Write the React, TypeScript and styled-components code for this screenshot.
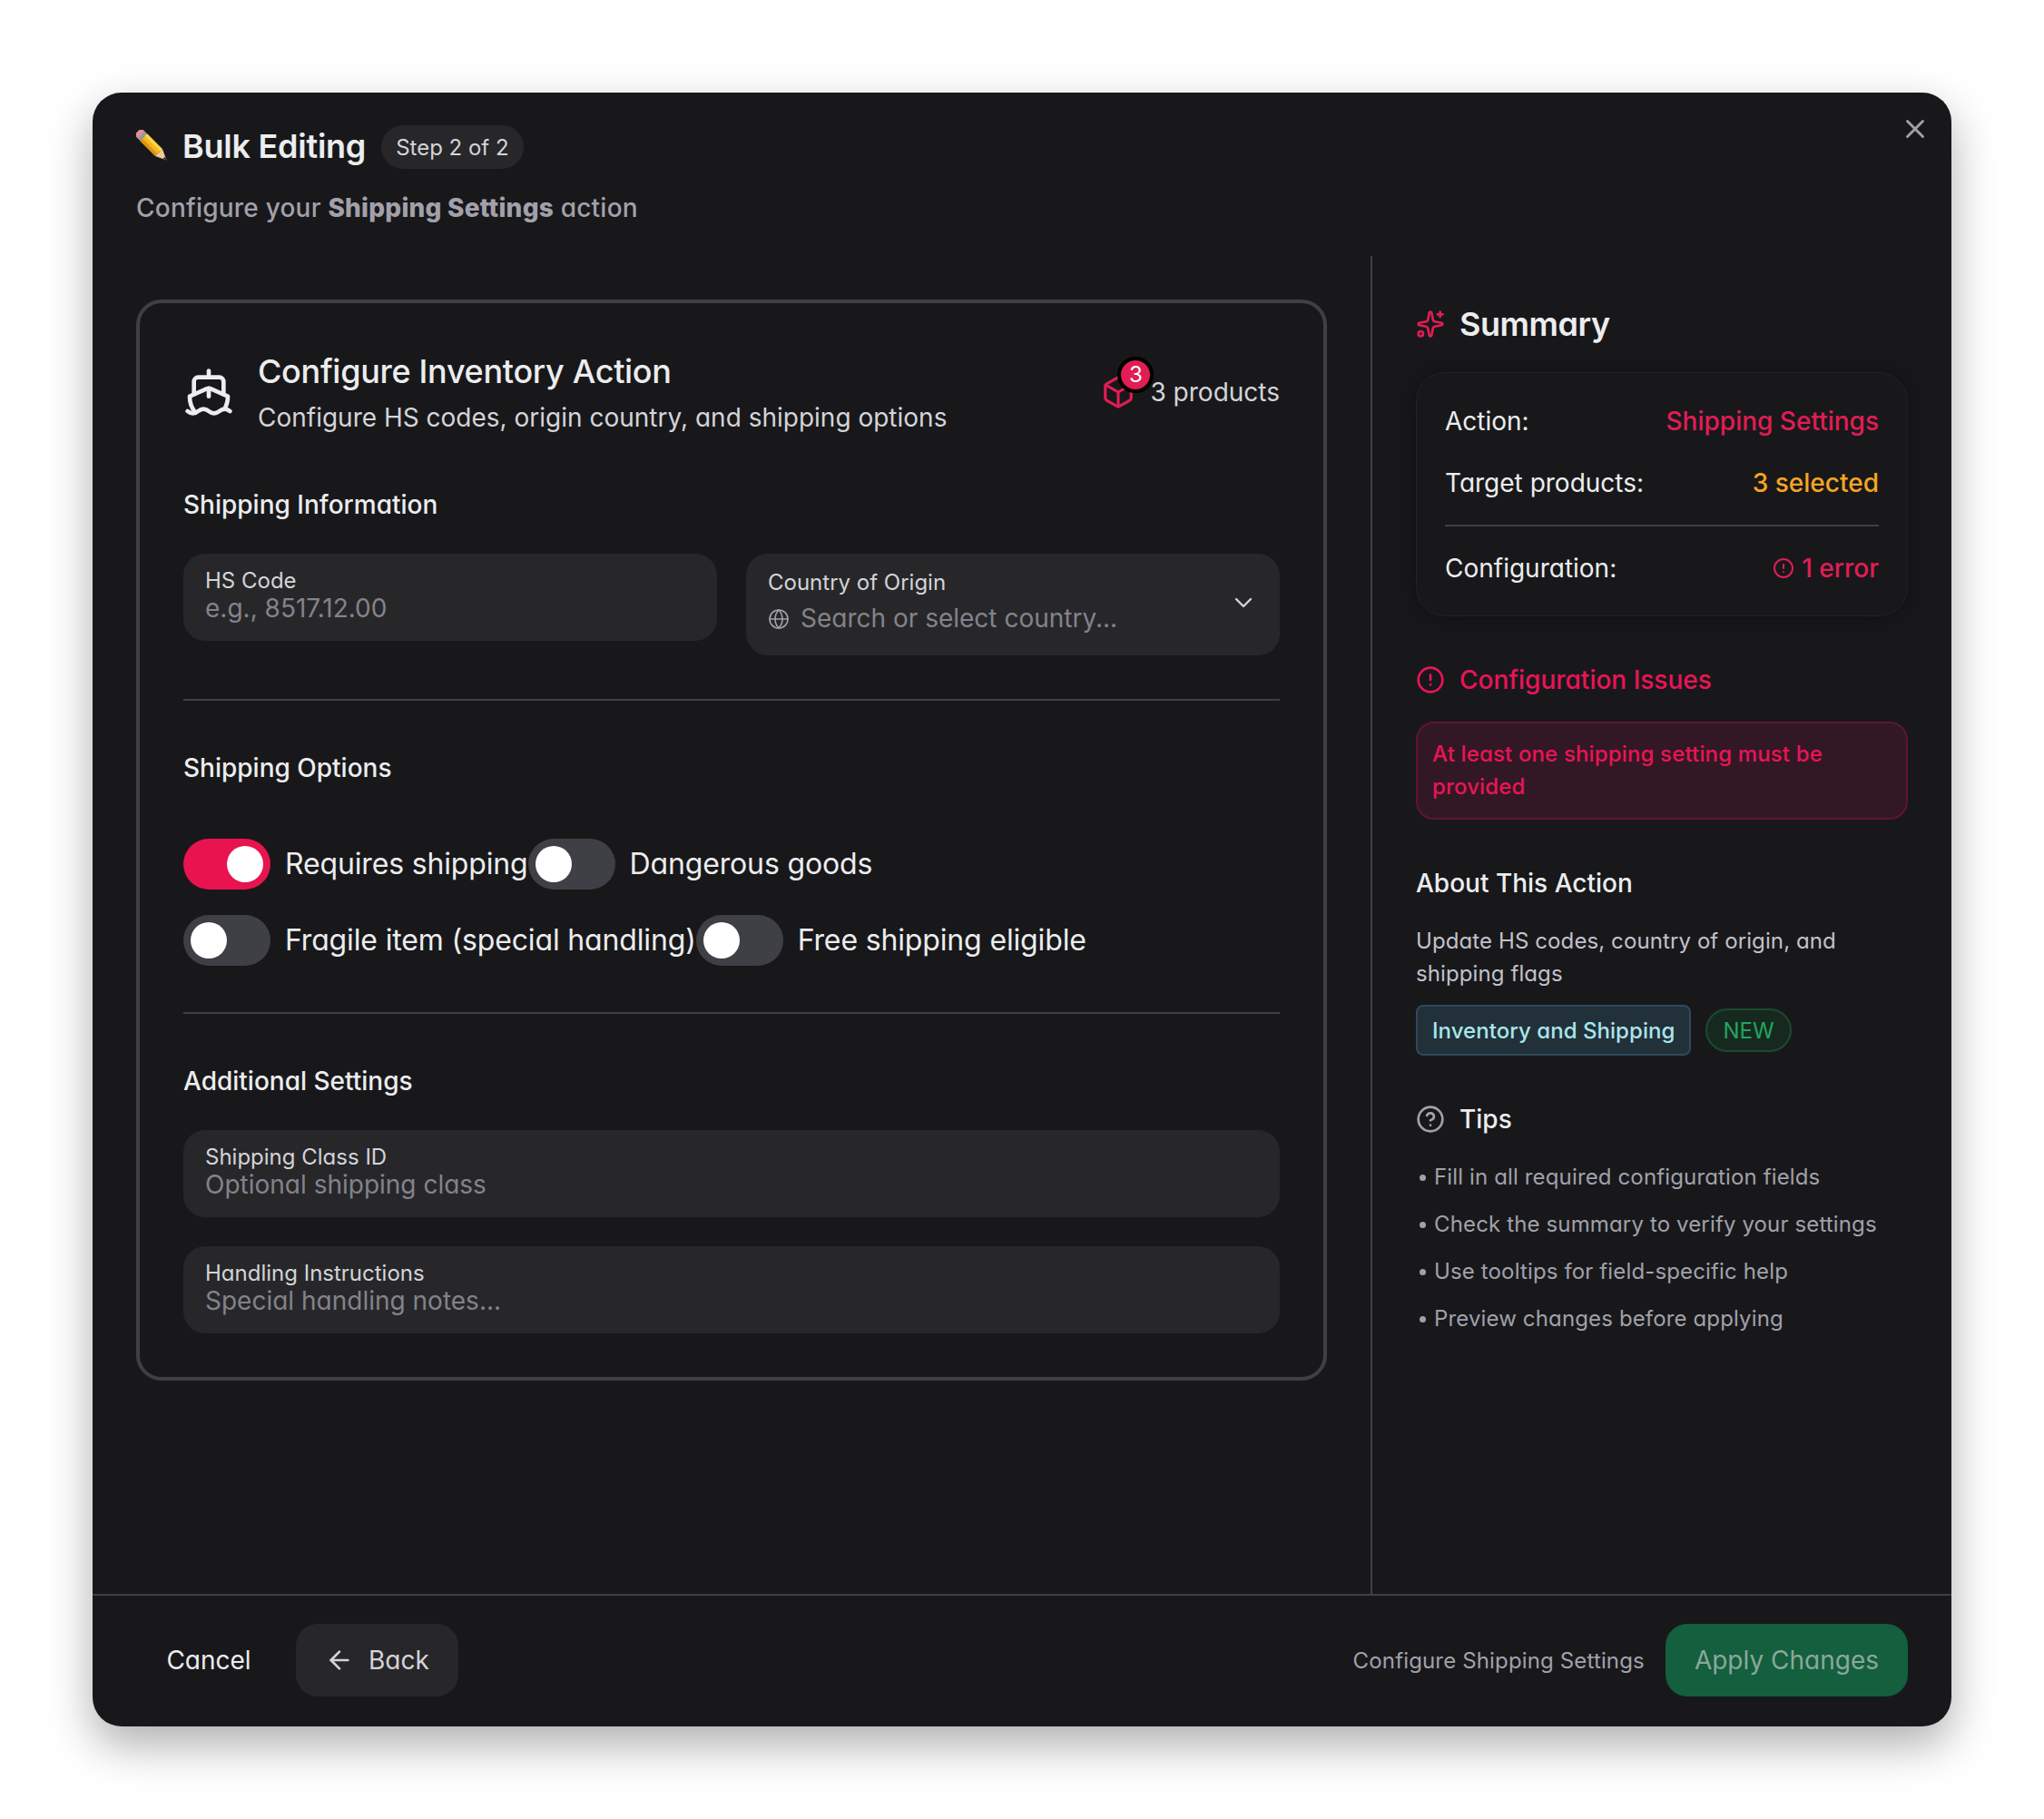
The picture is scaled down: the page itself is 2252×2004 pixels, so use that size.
import styled, { createGlobalStyle } from "styled-components";
import {
  ArrowLeft,
  Box,
  ChevronDown,
  CircleAlert,
  CircleHelp,
  Globe,
  Ship,
  Sparkles,
  X,
} from "lucide-react";

const RED = "#ea1456";

const GlobalStyle = createGlobalStyle`
  * {
    box-sizing: border-box;
  }

  body {
    margin: 0;
    background: #ffffff;
    font-family: Inter, "Noto Sans", "Liberation Sans", sans-serif;
    font-feature-settings: "cv11";
    color: #ecedee;
  }
`;

const PencilEmoji = () => (
  <svg width="36" height="36" viewBox="0 0 36 36">
    <g transform="rotate(45 18 18)">
      <rect x="-5" y="12.5" width="7" height="11" rx="3" fill="#e88a94" />
      <rect x="0" y="12.5" width="4" height="11" fill="#8d9db0" />
      <rect x="4" y="12.5" width="24" height="11" fill="#f5b81f" />
      <rect x="4" y="12.5" width="24" height="3.5" fill="#fbd44a" />
      <rect x="4" y="20" width="24" height="3.5" fill="#dd9412" />
      <path d="M28 12.5 L40 18 L28 23.5 Z" fill="#eccb9a" />
      <path d="M36 16.2 L40 18 L36 19.8 Z" fill="#33302c" />
    </g>
  </svg>
);

const Switch = ({ on, label }: { on?: boolean; label: string }) => (
  <SwitchItem>
    <Track $on={on}>
      <Thumb />
    </Track>
    <SwitchLabel>{label}</SwitchLabel>
  </SwitchItem>
);

const TextField = ({ label, placeholder }: { label: string; placeholder: string }) => (
  <Field>
    <FieldLabel>{label}</FieldLabel>
    <FieldValue>{placeholder}</FieldValue>
  </Field>
);

const App = () => {
  const tips = [
    "Fill in all required configuration fields",
    "Check the summary to verify your settings",
    "Use tooltips for field-specific help",
    "Preview changes before applying",
  ];

  return (
    <Page>
      <GlobalStyle />
      <Modal>
        <CloseButton>
          <X size={34} strokeWidth={2} />
        </CloseButton>
        <Header>
          <TitleRow>
            <PencilEmoji />
            <Title>Bulk Editing</Title>
            <StepBadge>Step 2 of 2</StepBadge>
          </TitleRow>
          <Subtitle>
            Configure your <strong>Shipping Settings</strong> action
          </Subtitle>
        </Header>

        <Body>
          <MainColumn>
            <Card>
              <CardHeader>
                <Ship size={56} strokeWidth={2} color="#ecedee" />
                <CardHeading>
                  <CardTitle>Configure Inventory Action</CardTitle>
                  <CardSubtitle>Configure HS codes, origin country, and shipping options</CardSubtitle>
                </CardHeading>
                <ProductCount>
                  <BoxWrap>
                    <Box size={38} strokeWidth={2} color="#e11d54" />
                    <CountBadge>3</CountBadge>
                  </BoxWrap>
                  <span>3 products</span>
                </ProductCount>
              </CardHeader>

              <SectionLabel>Shipping Information</SectionLabel>
              <FieldRow>
                <TextField label="HS Code" placeholder="e.g., 8517.12.00" />
                <SelectField>
                  <SelectBody>
                    <FieldLabel>Country of Origin</FieldLabel>
                    <SelectValue>
                      <Globe size={24} strokeWidth={1.6} color="#a1a1aa" />
                      <FieldValue>Search or select country...</FieldValue>
                    </SelectValue>
                  </SelectBody>
                  <ChevronDown size={32} strokeWidth={1.8} color="#d4d4d8" />
                </SelectField>
              </FieldRow>

              <Divider />

              <SectionLabel $spaced>Shipping Options</SectionLabel>
              <SwitchRows>
                <SwitchRow>
                  <Switch on label="Requires shipping" />
                  <Switch label="Dangerous goods" />
                </SwitchRow>
                <SwitchRow>
                  <Switch label="Fragile item (special handling)" />
                  <Switch label="Free shipping eligible" />
                </SwitchRow>
              </SwitchRows>

              <Divider />

              <SectionLabel>Additional Settings</SectionLabel>
              <FieldStack>
                <TextField label="Shipping Class ID" placeholder="Optional shipping class" />
                <TextField label="Handling Instructions" placeholder="Special handling notes..." />
              </FieldStack>
            </Card>
          </MainColumn>

          <SideColumn>
            <SummaryTitle>
              <Sparkles size={32} strokeWidth={2} color="#e11d54" />
              Summary
            </SummaryTitle>
            <SummaryCard>
              <SummaryRow>
                <span>Action:</span>
                <SummaryValue $color="#e11d54">Shipping Settings</SummaryValue>
              </SummaryRow>
              <SummaryRow>
                <span>Target products:</span>
                <SummaryValue $color="#f5a524">3 selected</SummaryValue>
              </SummaryRow>
              <SummaryDivider />
              <SummaryRow>
                <span>Configuration:</span>
                <SummaryValue $color="#e11d54">
                  <CircleAlert size={24} strokeWidth={2} />1 error
                </SummaryValue>
              </SummaryRow>
            </SummaryCard>

            <SideHeading $color={RED}>
              <CircleAlert size={32} strokeWidth={2} />
              Configuration Issues
            </SideHeading>
            <ErrorBox>At least one shipping setting must be provided</ErrorBox>

            <SideHeading>About This Action</SideHeading>
            <Description>Update HS codes, country of origin, and shipping flags</Description>
            <ChipRow>
              <CategoryChip>Inventory and Shipping</CategoryChip>
              <NewChip>NEW</NewChip>
            </ChipRow>

            <SideHeading>
              <CircleHelp size={32} strokeWidth={2} color="#a1a1aa" />
              Tips
            </SideHeading>
            <TipList>
              {tips.map((t) => (
                <TipItem key={t}>{t}</TipItem>
              ))}
            </TipList>
          </SideColumn>
        </Body>

        <Footer>
          <FooterGroup>
            <CancelButton>Cancel</CancelButton>
            <BackButton>
              <ArrowLeft size={32} strokeWidth={2} />
              Back
            </BackButton>
          </FooterGroup>
          <FooterGroup $gap={23}>
            <FooterHint>Configure Shipping Settings</FooterHint>
            <ApplyButton>Apply Changes</ApplyButton>
          </FooterGroup>
        </Footer>
      </Modal>
    </Page>
  );
};

const Page = styled.div`
  width: 2252px;
  height: 2004px;
  padding: 102px;
  background: #ffffff;
`;

const Modal = styled.div`
  position: relative;
  display: flex;
  flex-direction: column;
  width: 2048px;
  height: 1800px;
  background: #18181b;
  border-radius: 32px;
  box-shadow: 0 20px 50px rgba(0, 0, 0, 0.32);
`;

const CloseButton = styled.div`
  position: absolute;
  top: 23px;
  right: 23px;
  display: flex;
  color: #a1a1aa;
`;

const Header = styled.div`
  height: 180px;
  padding: 35px 48px 0;
`;

const TitleRow = styled.div`
  display: flex;
  align-items: center;
  height: 48px;
`;

const Title = styled.h1`
  margin: 0 17px 0 15px;
  font-size: 36px;
  font-weight: 600;
  line-height: 48px;
  letter-spacing: -0.25px;
  color: #ecedee;
`;

const StepBadge = styled.span`
  display: flex;
  align-items: center;
  height: 48px;
  margin-top: 2px;
  padding: 0 16px;
  border-radius: 24px;
  background: #27272a;
  font-size: 24px;
  color: #d4d4d8;
`;

const Subtitle = styled.p`
  margin: 24px 0 0;
  font-size: 28px;
  font-weight: 500;
  line-height: 40px;
  letter-spacing: 0.22px;
  color: #a1a1aa;

  strong {
    font-weight: 800;
  }
`;

const Body = styled.div`
  flex: 1;
  display: flex;
  min-height: 0;
`;

const MainColumn = styled.div`
  flex: 1;
  padding: 48px;
`;

const Card = styled.div`
  padding: 48px;
  border: 4px solid #3f3f46;
  border-radius: 28px;
`;

const CardHeader = styled.div`
  display: flex;
  align-items: center;
  gap: 26px;
`;

const CardHeading = styled.div`
  flex: 1;
`;

const CardTitle = styled.h2`
  margin: -1px 0 1px;
  font-size: 36px;
  font-weight: 500;
  line-height: 56px;
  letter-spacing: -0.3px;
  color: #ecedee;
`;

const CardSubtitle = styled.p`
  margin: 0;
  font-size: 28px;
  line-height: 44px;
  color: #d4d4d8;
`;

const ProductCount = styled.div`
  display: flex;
  align-items: center;
  gap: 16px;
  font-size: 28px;
  line-height: 40px;
  color: #d4d4d8;
`;

const BoxWrap = styled.div`
  position: relative;
  display: flex;
`;

const CountBadge = styled.span`
  position: absolute;
  top: -20px;
  right: -20px;
  display: flex;
  align-items: center;
  justify-content: center;
  width: 40px;
  height: 40px;
  border: 4px solid #000000;
  border-radius: 50%;
  background: #e11d54;
  font-size: 24px;
  color: #ffffff;
`;

const SectionLabel = styled.h3<{ $spaced?: boolean }>`
  margin: 54px 0 ${(props) => (props.$spaced ? "58px" : "34px")};
  font-size: 28px;
  font-weight: 500;
  line-height: 40px;
  color: #ecedee;
`;

const FieldRow = styled.div`
  display: grid;
  grid-template-columns: 1fr 1fr;
  gap: 32px;
  align-items: start;
`;

const FieldStack = styled.div`
  display: flex;
  flex-direction: column;
  gap: 32px;
`;

const Field = styled.div`
  height: 96px;
  padding: 15px 24px 0;
  border-radius: 24px;
  background: #27272a;
`;

const FieldLabel = styled.div`
  font-size: 24px;
  line-height: 30px;
  color: #d4d4d8;
`;

const FieldValue = styled.div`
  font-size: 28px;
  line-height: 30px;
  color: #83838b;
`;

const SelectField = styled.div`
  display: flex;
  align-items: center;
  height: 112px;
  padding: 0 24px 4px;
  border-radius: 24px;
  background: #27272a;
`;

const SelectBody = styled.div`
  flex: 1;
  margin-top: -6px;
`;

const SelectValue = styled.div`
  display: flex;
  align-items: center;
  gap: 12px;
  margin-top: 9px;

  svg {
    margin-top: 3px;
  }
`;

const Divider = styled.hr`
  height: 2px;
  margin: 48px 0 0;
  border: none;
  background: #3f3f46;
`;

const SwitchRows = styled.div`
  display: flex;
  flex-direction: column;
  gap: 28px;
  margin-bottom: 51px;
`;

const SwitchRow = styled.div`
  display: flex;
`;

const SwitchItem = styled.div`
  display: flex;
  align-items: center;
  gap: 16px;
`;

const Track = styled.div<{ $on?: boolean }>`
  display: flex;
  align-items: center;
  justify-content: ${(props) => (props.$on ? "flex-end" : "flex-start")};
  width: 96px;
  height: 56px;
  padding: 0 8px;
  border-radius: 28px;
  background: ${(props) => (props.$on ? "#e8134f" : "#3f3f46")};
`;

const Thumb = styled.div`
  width: 40px;
  height: 40px;
  border-radius: 50%;
  background: #ffffff;
`;

const SwitchLabel = styled.span`
  font-size: 32px;
  line-height: 44px;
  letter-spacing: -0.15px;
  color: #ecedee;
`;

const SideColumn = styled.div`
  width: 640px;
  padding: 48px;
  border-left: 2px solid #3f3f46;
`;

const SummaryTitle = styled.h2`
  display: flex;
  align-items: center;
  gap: 16px;
  margin: -1px 0 25px;
  font-size: 36px;
  font-weight: 600;
  line-height: 56px;
  letter-spacing: -0.45px;
  color: #ecedee;
`;

const SummaryCard = styled.div`
  padding: 33px 31px 32px;
  border: 1px solid #222226;
  border-radius: 32px;
  background: #18181b;
  box-shadow: 0 0 24px rgba(0, 0, 0, 0.35);
`;

const SummaryRow = styled.div`
  display: flex;
  justify-content: space-between;
  align-items: center;
  font-size: 28px;
  line-height: 40px;
  color: #ecedee;

  & + & {
    margin-top: 28px;
  }
`;

const SummaryValue = styled.span<{ $color: string }>`
  display: flex;
  align-items: center;
  gap: 8px;
  font-weight: 500;
  color: ${(props) => props.$color};
`;

const SummaryDivider = styled.hr`
  height: 2px;
  margin: 26px 0;
  border: none;
  background: #3f3f46;
`;

const SideHeading = styled.h3<{ $color?: string }>`
  display: flex;
  align-items: center;
  gap: 16px;
  margin: 50px 0 26px;
  font-size: 28px;
  font-weight: 500;
  line-height: 40px;
  color: ${(props) => props.$color || "#ecedee"};
`;

const ErrorBox = styled.div`
  padding: 16px;
  border: 2px solid #611430;
  border-radius: 20px;
  background: #321824;
  font-size: 24px;
  font-weight: 500;
  line-height: 36px;
  letter-spacing: 0.15px;
  color: ${RED};
`;

const Description = styled.p`
  margin: 0 0 16px;
  font-size: 24px;
  line-height: 36px;
  letter-spacing: 0.1px;
  color: #c2c2c9;
`;

const ChipRow = styled.div`
  display: flex;
  align-items: center;
  gap: 16px;
`;

const CategoryChip = styled.span`
  display: flex;
  align-items: center;
  height: 56px;
  padding: 0 16px;
  border: 2px solid #2e4a5c;
  border-radius: 8px;
  background: #22303a;
  font-size: 24px;
  font-weight: 500;
  letter-spacing: 0.05px;
  color: #a8e6ea;
`;

const NewChip = styled.span`
  display: flex;
  align-items: center;
  height: 48px;
  padding: 0 17px;
  border: 2px solid #1b4a30;
  border-radius: 24px;
  background: #17291f;
  font-size: 24px;
  color: #22a55f;
`;

const TipList = styled.ul`
  display: flex;
  flex-direction: column;
  gap: 16px;
  margin: 0;
  padding: 0;
  list-style: none;
`;

const TipItem = styled.li`
  display: flex;
  align-items: center;
  gap: 9px;
  font-size: 24px;
  line-height: 36px;
  letter-spacing: 0.14px;
  color: #a1a1aa;

  &::before {
    content: "";
    width: 7px;
    height: 7px;
    margin-left: 4px;
    border-radius: 50%;
    background: #a1a1aa;
  }
`;

const Footer = styled.div`
  display: flex;
  align-items: center;
  justify-content: space-between;
  height: 146px;
  padding: 0 48px 2px;
  border-top: 2px solid #3f3f46;
`;

const FooterGroup = styled.div<{ $gap?: number }>`
  display: flex;
  align-items: center;
  gap: ${(props) => props.$gap ?? 16}px;
`;

const CancelButton = styled.div`
  display: flex;
  align-items: center;
  justify-content: center;
  width: 160px;
  height: 80px;
  font-size: 28px;
  color: #ecedee;
`;

const BackButton = styled.div`
  display: flex;
  align-items: center;
  gap: 16px;
  height: 80px;
  padding: 0 32px;
  border-radius: 24px;
  background: #27272a;
  font-size: 28px;
  color: #d4d4d8;
`;

const FooterHint = styled.span`
  font-size: 24px;
  letter-spacing: 0.15px;
  color: #a1a1aa;
`;

const ApplyButton = styled.div`
  display: flex;
  align-items: center;
  height: 80px;
  padding: 0 32px;
  border-radius: 24px;
  background: #135f3e;
  font-size: 28px;
  color: #8aa89a;
`;

export default App;
